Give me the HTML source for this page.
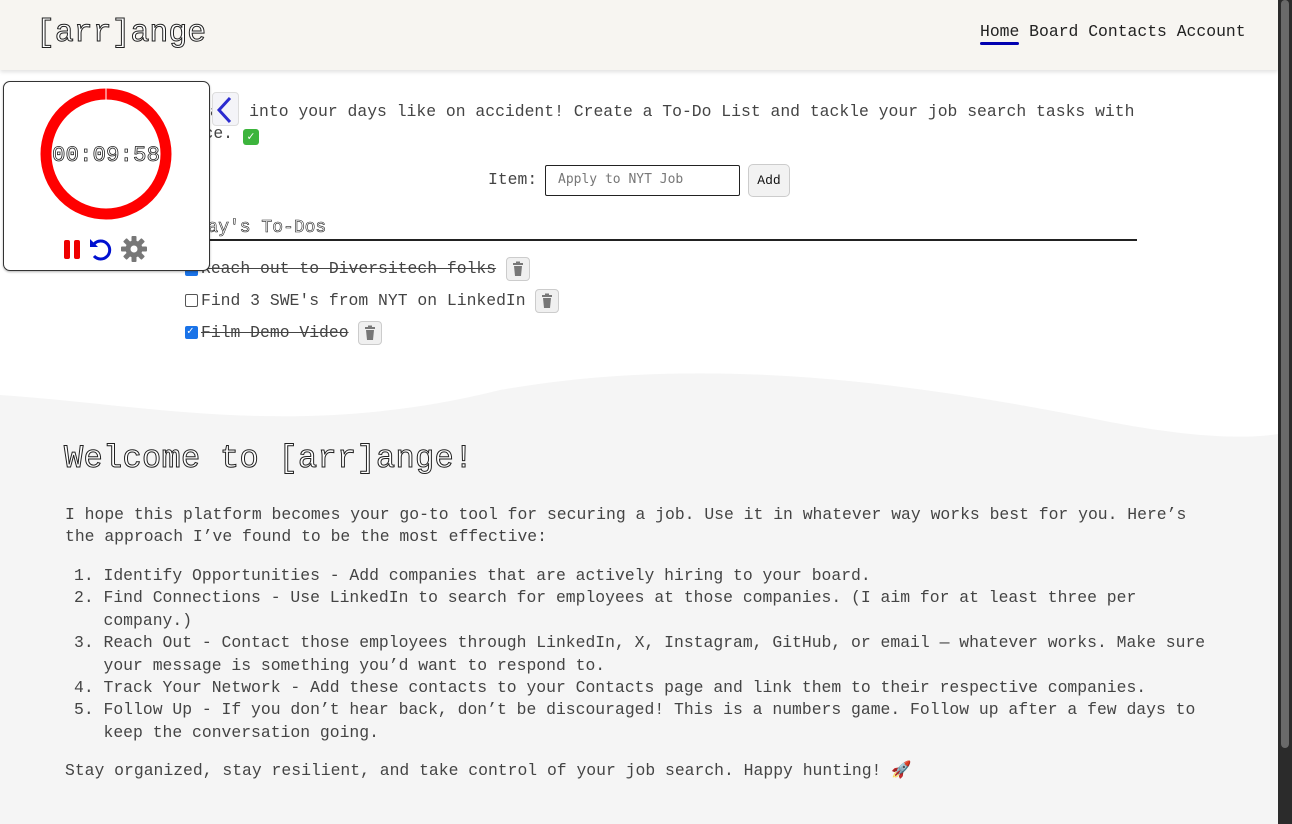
<!DOCTYPE html>
<html><head><meta charset="utf-8"><style>
*{box-sizing:border-box;margin:0;padding:0}
html,body{width:1292px;height:824px;overflow:hidden;background:#fff}
body{font-family:"Liberation Mono",monospace;color:#444;position:relative}
.mono{font-family:"Liberation Mono",monospace;font-size:16.4px;white-space:pre;position:absolute;line-height:22px}
.out{color:#fff;-webkit-text-stroke:1px #222}
header{position:absolute;left:0;top:0;width:1278px;height:70px;background:#f7f5f1;box-shadow:0 2px 4px rgba(0,0,0,.12)}
.sb{position:absolute;left:1278px;top:0;width:14px;height:824px;background:#2b2b2b}
.thumb{position:absolute;left:1281px;top:0;width:8px;height:748px;background:#6a6a6a;border-radius:4px}
.widget{position:absolute;left:3px;top:81px;width:207px;height:190px;background:#fff;border:1px solid #333;border-radius:7px;box-shadow:0 1px 2px rgba(0,0,0,.3)}
.trash{position:absolute;width:24px;height:24px;border:1px solid #ccc;border-radius:4px;background:#f0f0f0}
.chk{position:absolute;width:13px;height:13px;border:1px solid #555;border-radius:2px;background:#fff}
.chk.on{background:#1a73e8;border-color:#1a73e8}
.strike{text-decoration:line-through}
</style></head><body>
<header></header>
<div class="mono out" style="left:36px;top:14px;font-size:31.5px;line-height:40px">[arr]ange</div>
<div class="mono" style="left:980px;top:21px;color:#222">Home Board Contacts Account</div>
<div style="position:absolute;left:980px;top:42px;width:39px;height:3px;background:#0000b0;border-radius:2px"></div>

<div class="mono" style="left:200px;top:101px">Fall into your days like on accident! Create a To-Do List and tackle your job search tasks with</div>
<div class="mono" style="left:174px;top:123px">grace. <span style="display:inline-block;width:16px;height:16px;background:#3cb43c;border-radius:3px;color:#fff;font-size:12px;line-height:16px;text-align:center;vertical-align:-2px">✓</span></div>
<div style="position:absolute;left:212px;top:92px;width:27px;height:34px;border:1px solid #ddd;border-radius:4px;background:#f4f4f8"></div>
<svg style="position:absolute;left:212px;top:95px" width="27" height="30"><path d="M18 3 L7 15 L18 27" stroke="#2b2bd0" stroke-width="3" fill="none"/></svg>

<div class="mono" style="left:488px;top:169px">Item:</div>
<div style="position:absolute;left:545px;top:165px;width:195px;height:31px;border:1.5px solid #222;border-radius:2px;font-family:'DejaVu Sans Mono',monospace;font-size:13px;color:#777;padding:6px 12px">Apply to NYT Job</div>
<div style="position:absolute;left:748px;top:164px;width:42px;height:33px;border:1px solid #ccc;border-radius:5px;background:#f2f2f2;font-size:13px;text-align:center;line-height:31px;color:#111">Add</div>

<div class="mono out" style="left:175px;top:217px;font-size:18px;-webkit-text-stroke:0.6px #222">Today's To-Dos</div>
<div style="position:absolute;left:185px;top:239px;width:952px;height:1.5px;background:#222"></div>

<div class="chk on" style="left:185px;top:263px"></div>
<div class="mono strike" style="left:201px;top:258px">Reach out to Diversitech folks</div>
<div class="trash" style="left:506px;top:257px"></div>
<div class="chk" style="left:185px;top:294px"></div>
<div class="mono" style="left:201px;top:290px">Find 3 SWE's from NYT on LinkedIn</div>
<div class="trash" style="left:535px;top:289px"></div>
<div class="chk on" style="left:185px;top:326px"><span style="position:absolute;left:1px;top:-3px;color:#fff;font-size:11px">✓</span></div>
<div class="mono strike" style="left:201px;top:322px">Film Demo Video</div>
<div class="trash" style="left:358px;top:321px"></div>

<svg style="position:absolute;left:0;top:370px" width="1278" height="454"><path d="M0 25 C150 35 300 70 500 20 C700 -15 900 10 1100 50 C1180 66 1240 70 1278 64 L1278 454 L0 454Z" fill="#f5f5f5"/></svg>

<div class="mono out" style="left:64px;top:439px;font-size:32px;line-height:40px;letter-spacing:0.3px">Welcome to [arr]ange!</div>
<div class="mono" style="left:65px;top:504px">I hope this platform becomes your go-to tool for securing a job. Use it in whatever way works best for you. Here’s
the approach I’ve found to be the most effective:</div>
<div class="mono" style="left:74px;top:565px;line-height:22.4px">1. Identify Opportunities - Add companies that are actively hiring to your board.
2. Find Connections - Use LinkedIn to search for employees at those companies. (I aim for at least three per
   company.)
3. Reach Out - Contact those employees through LinkedIn, X, Instagram, GitHub, or email — whatever works. Make sure
   your message is something you’d want to respond to.
4. Track Your Network - Add these contacts to your Contacts page and link them to their respective companies.
5. Follow Up - If you don’t hear back, don’t be discouraged! This is a numbers game. Follow up after a few days to
   keep the conversation going.</div>
<div class="mono" style="left:65px;top:760px">Stay organized, stay resilient, and take control of your job search. Happy hunting! 🚀</div>

<div class="widget"></div>
<svg style="position:absolute;left:3px;top:81px" width="207" height="190">
<circle cx="103" cy="73" r="60" fill="none" stroke="#f00" stroke-width="11"/>
<line x1="103" y1="7" x2="103" y2="19" stroke="#fff" stroke-width="1"/>
<text x="103" y="80" text-anchor="middle" font-family="Liberation Mono" font-size="22.5" fill="#fff" stroke="#222" stroke-width="0.8">00:09:58</text>
<rect x="61" y="159" width="6" height="19" rx="2" fill="#e00"/>
<rect x="71" y="159" width="6" height="19" rx="2" fill="#e00"/>
<path d="M91 163 A9 9 0 1 1 91 175" fill="none" stroke="#0010d0" stroke-width="3"/>
<path d="M87 158 L87 166 L95 166Z" fill="#0010d0"/>
<g transform="translate(131,168)" fill="#777">
<circle r="8.5"/>
<g><rect x="-2.5" y="-13" width="5" height="26" rx="1"/><rect x="-2.5" y="-13" width="5" height="26" rx="1" transform="rotate(45)"/><rect x="-2.5" y="-13" width="5" height="26" rx="1" transform="rotate(90)"/><rect x="-2.5" y="-13" width="5" height="26" rx="1" transform="rotate(135)"/></g>
<circle r="3.5" fill="#fff"/>
</g>
</svg>

<div class="sb"></div><div class="thumb"></div>
<script>
document.querySelectorAll('.trash').forEach(function(t){t.innerHTML='<svg width="22" height="22" style="position:absolute;left:0;top:0"><rect x="6" y="5" width="10" height="2" fill="#777"/><rect x="9" y="3.5" width="4" height="2" fill="#777"/><path d="M7 8 L15 8 L14 18 L8 18Z" fill="#777"/></svg>';});
</script>
</body></html>
